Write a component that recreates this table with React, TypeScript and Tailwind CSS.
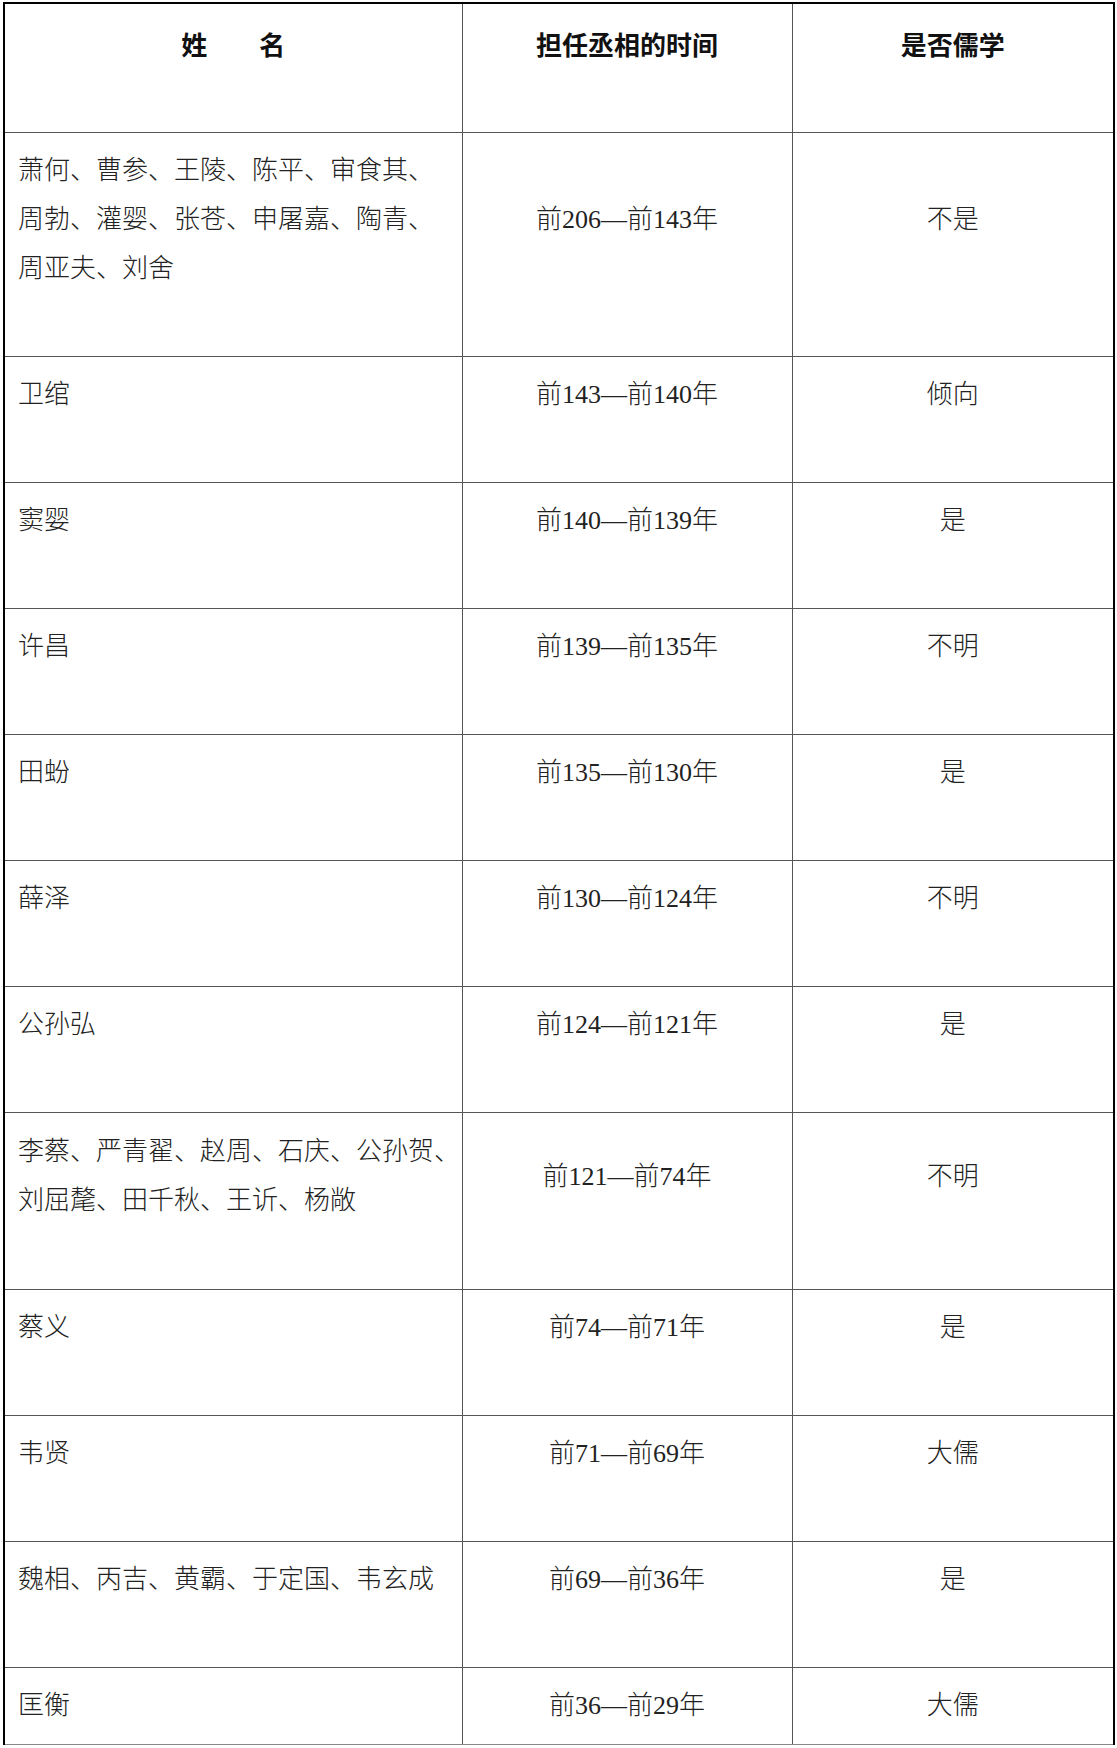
import React from 'react';

type Row = {
  names: string[];
  time: string;
  ru: string;
  h: string;
};

const ROWS: Row[] = [
  {
    names: ['萧何、曹参、王陵、陈平、审食其、', '周勃、灌婴、张苍、申屠嘉、陶青、', '周亚夫、刘舍'],
    time: '前206—前143年',
    ru: '不是',
    h: 'h-[224px]',
  },
  { names: ['卫绾'], time: '前143—前140年', ru: '倾向', h: 'h-[126px]' },
  { names: ['窦婴'], time: '前140—前139年', ru: '是', h: 'h-[126px]' },
  { names: ['许昌'], time: '前139—前135年', ru: '不明', h: 'h-[126px]' },
  { names: ['田蚡'], time: '前135—前130年', ru: '是', h: 'h-[126px]' },
  { names: ['薛泽'], time: '前130—前124年', ru: '不明', h: 'h-[126px]' },
  { names: ['公孙弘'], time: '前124—前121年', ru: '是', h: 'h-[126px]' },
  {
    names: ['李蔡、严青翟、赵周、石庆、公孙贺、', '刘屈氂、田千秋、王䜣、杨敞'],
    time: '前121—前74年',
    ru: '不明',
    h: 'h-[177px]',
  },
  { names: ['蔡义'], time: '前74—前71年', ru: '是', h: 'h-[126px]' },
  { names: ['韦贤'], time: '前71—前69年', ru: '大儒', h: 'h-[126px]' },
  { names: ['魏相、丙吉、黄霸、于定国、韦玄成'], time: '前69—前36年', ru: '是', h: 'h-[126px]' },
];

const SERIF = "font-['Liberation_Serif','Noto_Sans_CJK_SC',serif] font-light";
const CELL = 'border border-[#555] align-middle text-[26px] leading-[49px] text-[#222]';

export default function App() {
  return (
    <div className="min-h-[1748px] w-[1117px] overflow-hidden bg-white pl-[3px] pt-[2px]">
      <table className="w-[1110px] table-fixed border-collapse border-2 border-b-0 border-black">
        <colgroup>
          <col className="w-[458px]" />
          <col className="w-[330px]" />
          <col className="w-[322px]" />
        </colgroup>
        <thead>
          <tr className="h-[129px]">
            {['姓\u3000\u3000名', '担任丞相的时间', '是否儒学'].map((t) => (
              <th
                key={t}
                className="border border-[#555] align-middle font-['Noto_Sans_CJK_SC',sans-serif] text-[26px] font-bold leading-[49px] text-[#111] whitespace-pre"
              >
                <div>{t}</div>
                <div className="h-[49px]" />
              </th>
            ))}
          </tr>
        </thead>
        <tbody className={SERIF}>
          {ROWS.map((r) => (
            <tr key={r.time} className={r.h}>
              <td className={`${CELL} px-[13px] text-left whitespace-nowrap`}>
                {r.names.map((n) => (
                  <div key={n}>{n}</div>
                ))}
                <div className="h-[49px]" />
              </td>
              <td className={`${CELL} text-center`}>
                <div>{r.time}</div>
                <div className="h-[49px]" />
              </td>
              <td className={`${CELL} text-center`}>
                <div>{r.ru}</div>
                <div className="h-[49px]" />
              </td>
            </tr>
          ))}
          <tr className="h-[77px]">
            <td className={`${CELL} border-b-[#888] px-[13px] text-left`}>匡衡</td>
            <td className={`${CELL} border-b-[#888] text-center`}>前36—前29年</td>
            <td className={`${CELL} border-b-[#888] text-center`}>大儒</td>
          </tr>
        </tbody>
      </table>
    </div>
  );
}
